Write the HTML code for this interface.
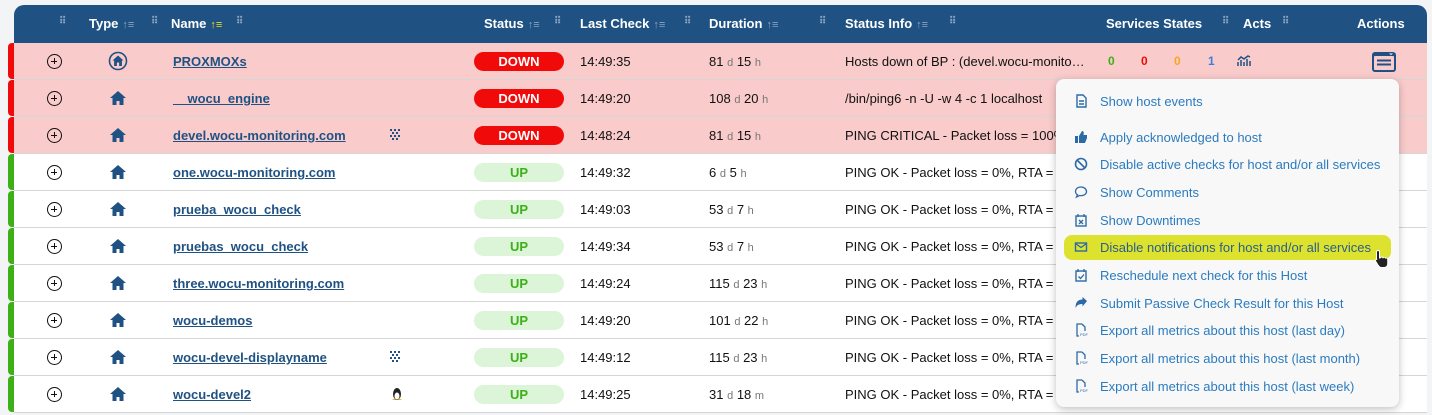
<!DOCTYPE html>
<html><head><meta charset="utf-8"><style>
*{box-sizing:border-box;margin:0;padding:0}
body{width:1432px;height:415px;overflow:hidden;background:#f3f4f6;font-family:"Liberation Sans",sans-serif;position:relative}
.hdr{position:absolute;left:14px;top:5px;width:1413px;height:38px;background:#1f5283;border-radius:10px 10px 0 0;color:#fff;font-weight:bold;font-size:13px}
.hdr>span{position:absolute;top:11px;white-space:nowrap}
.g{color:#8aa4c2;font-size:10px;letter-spacing:-1px}
.s{color:#8aa4c2;font-size:11px;font-weight:normal;margin-left:4px}
.row{position:absolute;left:14px;width:1413px;height:37px;border-bottom:1px solid #d6d6d6;font-size:13px;color:#111}
.row.d{background:#f9cbcb}.row.u{background:#fff}
.bar{position:absolute;left:8px;width:6px;height:36px;border-radius:4px 0 0 4px}
.row>*{position:absolute}
.pl{left:33px;top:11px;width:15px;height:15px;border:1.5px solid #111;border-radius:50%}
.pl:before{content:"";position:absolute;left:3px;top:5.5px;width:6px;height:1.5px;background:#111}
.pl:after{content:"";position:absolute;left:5.5px;top:3px;width:1.5px;height:6px;background:#111}
.hm{left:96px;top:11px}
.nm{left:159px;top:11px;color:#1f5283;font-weight:bold;text-decoration:underline}
.st{left:460px;top:9px;width:90px;height:19px;border-radius:10px;text-align:center;font-weight:bold;line-height:19px;font-size:13px}
.dn{background:#f10a0a;color:#fff}.up{background:#dcf5d8;color:#3cb016}
.lc{left:566px;top:11px}
.du{left:695px;top:11px}.du i{font-style:normal;color:#777;font-size:11px}
.si{left:831px;top:11px;white-space:nowrap}
.menu{position:absolute;left:1056px;top:79px;width:343px;height:328px;background:#f8f8f8;border-radius:8px;box-shadow:0 2px 8px rgba(0,0,0,.25)}
.it{position:absolute;left:44px;font-size:13px;color:#2b7bbf;white-space:nowrap}
.ic{position:absolute;left:18px;width:14px;height:14px;color:#2b6aa6}
</style></head><body>
<div class="hdr">
<span class="g" style="left:45px">⠿</span>
<span style="left:75px">Type<span class="s">↑≡</span></span><span class="g" style="left:137px">⠿</span>
<span style="left:157px">Name<span class="s" style="color:#e6e020">↑≡</span></span><span class="g" style="left:222px">⠿</span>
<span style="left:470px">Status<span class="s">↑≡</span></span><span class="g" style="left:540px">⠿</span>
<span style="left:566px">Last Check<span class="s">↑≡</span></span><span class="g" style="left:670px">⠿</span>
<span style="left:695px">Duration<span class="s">↑≡</span></span><span class="g" style="left:805px">⠿</span>
<span style="left:831px">Status Info<span class="s">↑≡</span></span><span class="g" style="left:935px">⠿</span>
<span style="left:1092px">Services States</span><span class="g" style="left:1208px">⠿</span>
<span style="left:1229px">Acts</span><span class="g" style="left:1268px">⠿</span>
<span style="left:1343px">Actions</span>
</div>

<div class="bar" style="top:43px;background:#f10a0a"></div>
<div class="row d" style="top:43px"><div class="pl"></div>
<svg class="hm" style="left:94px;top:8px" width="20" height="20" viewBox="0 0 20 20"><circle cx="10" cy="10" r="8.5" fill="none" stroke="#1f5283" stroke-width="1.6"/><path d="M10 4.5L4.5 9.5h1.6V15h2.8v-3.5h2.2V15h2.8V9.5h1.6z" fill="#1f5283"/></svg>
<span class="nm">PROXMOXs</span><span class="st dn">DOWN</span><span class="lc">14:49:35</span><span class="du">81 <i>d</i> 15 <i>h</i></span><span class="si">Hosts down of BP : (devel.wocu-monito…</span>
<span style="left:1094px;top:11px;color:#3cb016;font-weight:bold;font-size:12px">0</span>
<span style="left:1127px;top:11px;color:#f10a0a;font-weight:bold;font-size:12px">0</span>
<span style="left:1160px;top:11px;color:#f5a623;font-weight:bold;font-size:12px">0</span>
<span style="left:1194px;top:11px;color:#3a7ee0;font-weight:bold;font-size:12px">1</span>
<svg style="left:1223px;top:12px" width="14" height="12" viewBox="0 0 14 12"><path d="M1 11V7M4 11V5M7 11V7M10 11V4M13 11V6M1 5L4 2 7 4 11 1 13 2" stroke="#1f5283" stroke-width="1.5" fill="none"/></svg>
<svg style="left:1357px;top:8px" width="26" height="22" viewBox="0 0 26 22"><rect x="1" y="1" width="24" height="20" rx="3" fill="#1f5283"/><rect x="3" y="5" width="20" height="14" rx="1" fill="#f9cbcb"/><rect x="6" y="8.5" width="14" height="2" fill="#1f5283"/><rect x="6" y="12.5" width="14" height="2" fill="#1f5283"/><path d="M18 2.5h4l-2 1.5z" fill="#fff"/></svg>
</div>

<div class="bar" style="top:80px;background:#f10a0a"></div>
<div class="row d" style="top:80px"><div class="pl"></div>
<svg class="hm" width="16" height="14" viewBox="0 0 16 14"><path d="M8 0L0 7h2.5v7h4V10h3v4h4V7H16z" fill="#1f5283"/></svg>
<span class="nm">__wocu_engine</span><span class="st dn">DOWN</span><span class="lc">14:49:20</span><span class="du">108 <i>d</i> 20 <i>h</i></span><span class="si">/bin/ping6 -n -U -w 4 -c 1 localhost</span></div>

<div class="bar" style="top:117px;background:#f10a0a"></div>
<div class="row d" style="top:117px"><div class="pl"></div>
<svg class="hm" width="16" height="14" viewBox="0 0 16 14"><path d="M8 0L0 7h2.5v7h4V10h3v4h4V7H16z" fill="#1f5283"/></svg>
<span class="nm">devel.wocu-monitoring.com</span>
<svg style="left:376px;top:12px" width="11" height="11" viewBox="0 0 11 11" fill="#1f5283"><rect x="0" y="0" width="2" height="2"/><rect x="4" y="0" width="2" height="2"/><rect x="8" y="0" width="2" height="2"/><rect x="2" y="3" width="2" height="2"/><rect x="6" y="3" width="2" height="2"/><rect x="0" y="6" width="2" height="2"/><rect x="4" y="6" width="2" height="2"/><rect x="8" y="6" width="2" height="2"/><rect x="2" y="9" width="2" height="2"/><rect x="6" y="9" width="2" height="2"/></svg>
<span class="st dn">DOWN</span><span class="lc">14:48:24</span><span class="du">81 <i>d</i> 15 <i>h</i></span><span class="si">PING CRITICAL - Packet loss = 100%</span></div>

<div class="bar" style="top:154px;background:#3cb016"></div>
<div class="row u" style="top:154px"><div class="pl"></div>
<svg class="hm" width="16" height="14" viewBox="0 0 16 14"><path d="M8 0L0 7h2.5v7h4V10h3v4h4V7H16z" fill="#1f5283"/></svg>
<span class="nm">one.wocu-monitoring.com</span><span class="st up">UP</span><span class="lc">14:49:32</span><span class="du">6 <i>d</i> 5 <i>h</i></span><span class="si">PING OK - Packet loss = 0%, RTA =</span></div>

<div class="bar" style="top:191px;background:#3cb016"></div>
<div class="row u" style="top:191px"><div class="pl"></div>
<svg class="hm" width="16" height="14" viewBox="0 0 16 14"><path d="M8 0L0 7h2.5v7h4V10h3v4h4V7H16z" fill="#1f5283"/></svg>
<span class="nm">prueba_wocu_check</span><span class="st up">UP</span><span class="lc">14:49:03</span><span class="du">53 <i>d</i> 7 <i>h</i></span><span class="si">PING OK - Packet loss = 0%, RTA =</span></div>

<div class="bar" style="top:228px;background:#3cb016"></div>
<div class="row u" style="top:228px"><div class="pl"></div>
<svg class="hm" width="16" height="14" viewBox="0 0 16 14"><path d="M8 0L0 7h2.5v7h4V10h3v4h4V7H16z" fill="#1f5283"/></svg>
<span class="nm">pruebas_wocu_check</span><span class="st up">UP</span><span class="lc">14:49:34</span><span class="du">53 <i>d</i> 7 <i>h</i></span><span class="si">PING OK - Packet loss = 0%, RTA =</span></div>

<div class="bar" style="top:265px;background:#3cb016"></div>
<div class="row u" style="top:265px"><div class="pl"></div>
<svg class="hm" width="16" height="14" viewBox="0 0 16 14"><path d="M8 0L0 7h2.5v7h4V10h3v4h4V7H16z" fill="#1f5283"/></svg>
<span class="nm">three.wocu-monitoring.com</span><span class="st up">UP</span><span class="lc">14:49:24</span><span class="du">115 <i>d</i> 23 <i>h</i></span><span class="si">PING OK - Packet loss = 0%, RTA =</span></div>

<div class="bar" style="top:302px;background:#3cb016"></div>
<div class="row u" style="top:302px"><div class="pl"></div>
<svg class="hm" width="16" height="14" viewBox="0 0 16 14"><path d="M8 0L0 7h2.5v7h4V10h3v4h4V7H16z" fill="#1f5283"/></svg>
<span class="nm">wocu-demos</span><span class="st up">UP</span><span class="lc">14:49:20</span><span class="du">101 <i>d</i> 22 <i>h</i></span><span class="si">PING OK - Packet loss = 0%, RTA =</span></div>

<div class="bar" style="top:339px;background:#3cb016"></div>
<div class="row u" style="top:339px"><div class="pl"></div>
<svg class="hm" width="16" height="14" viewBox="0 0 16 14"><path d="M8 0L0 7h2.5v7h4V10h3v4h4V7H16z" fill="#1f5283"/></svg>
<span class="nm">wocu-devel-displayname</span>
<svg style="left:376px;top:12px" width="11" height="11" viewBox="0 0 11 11" fill="#1f5283"><rect x="0" y="0" width="2" height="2"/><rect x="4" y="0" width="2" height="2"/><rect x="8" y="0" width="2" height="2"/><rect x="2" y="3" width="2" height="2"/><rect x="6" y="3" width="2" height="2"/><rect x="0" y="6" width="2" height="2"/><rect x="4" y="6" width="2" height="2"/><rect x="8" y="6" width="2" height="2"/><rect x="2" y="9" width="2" height="2"/><rect x="6" y="9" width="2" height="2"/></svg>
<span class="st up">UP</span><span class="lc">14:49:12</span><span class="du">115 <i>d</i> 23 <i>h</i></span><span class="si">PING OK - Packet loss = 0%, RTA =</span></div>

<div class="bar" style="top:376px;background:#3cb016"></div>
<div class="row u" style="top:376px"><div class="pl"></div>
<svg class="hm" width="16" height="14" viewBox="0 0 16 14"><path d="M8 0L0 7h2.5v7h4V10h3v4h4V7H16z" fill="#1f5283"/></svg>
<span class="nm">wocu-devel2</span>
<svg style="left:377px;top:11px" width="12" height="14" viewBox="0 0 12 14"><ellipse cx="6" cy="7" rx="4" ry="6" fill="#222"/><ellipse cx="6" cy="9" rx="2.5" ry="3.5" fill="#fff"/><path d="M1 13l3-2 0 2zM11 13l-3-2 0 2z" fill="#f5b800"/></svg>
<span class="st up">UP</span><span class="lc">14:49:25</span><span class="du">31 <i>d</i> 18 <i>m</i></span><span class="si">PING OK - Packet loss = 0%, RTA =</span></div>

<div class="menu">
<div style="position:absolute;left:8px;top:156px;width:327px;height:25px;background:#dde22e;border-radius:8px"></div>
<svg class="ic" style="top:15px" viewBox="0 0 14 14"><path d="M3 1h6l3 3v9H3z M5 7h5M5 10h5" fill="none" stroke="#2b6aa6" stroke-width="1.4"/></svg><span class="it" style="top:15px">Show host events</span>
<svg class="ic" style="top:51px" viewBox="0 0 14 14"><path d="M1 6h3v7H1zM5 6l3-5c2 0 2 2 1.5 4H13v3l-2 5H5z" fill="#2b6aa6"/></svg><span class="it" style="top:51px">Apply acknowledged to host</span>
<svg class="ic" style="top:78px" viewBox="0 0 14 14"><circle cx="7" cy="7" r="5.5" fill="none" stroke="#2b6aa6" stroke-width="1.6"/><path d="M3 3l8 8" stroke="#2b6aa6" stroke-width="1.6"/></svg><span class="it" style="top:78px">Disable active checks for host and/or all services</span>
<svg class="ic" style="top:106px" viewBox="0 0 14 14"><path d="M7 2C3.5 2 1.5 4 1.5 6.5c0 1.5.8 2.6 2 3.3L2.5 12l3-1.5c.5.1 1 .1 1.5.1 3.5 0 5.5-2 5.5-4.1S10.5 2 7 2z" fill="none" stroke="#2b6aa6" stroke-width="1.3"/></svg><span class="it" style="top:106px">Show Comments</span>
<svg class="ic" style="top:134px" viewBox="0 0 14 14"><rect x="2" y="3" width="10" height="10" fill="none" stroke="#2b6aa6" stroke-width="1.4"/><path d="M4 1v3M10 1v3M5 7l4 4M9 7l-4 4" stroke="#2b6aa6" stroke-width="1.3"/></svg><span class="it" style="top:134px">Show Downtimes</span>
<svg class="ic" style="top:161px" viewBox="0 0 14 14"><rect x="1.5" y="3" width="11" height="8" fill="none" stroke="#2b6aa6" stroke-width="1.4"/><path d="M1.5 3.5L7 7.5l5.5-4" fill="none" stroke="#2b6aa6" stroke-width="1.3"/></svg><span class="it" style="top:161px;color:#2a5f8c">Disable notifications for host and/or all services</span>
<svg class="ic" style="top:189px" viewBox="0 0 14 14"><rect x="2" y="3" width="10" height="10" fill="none" stroke="#2b6aa6" stroke-width="1.4"/><path d="M4 1v3M10 1v3M4.5 8.5l2 2 3.5-4" fill="none" stroke="#2b6aa6" stroke-width="1.3"/></svg><span class="it" style="top:189px">Reschedule next check for this Host</span>
<svg class="ic" style="top:217px" viewBox="0 0 14 14"><path d="M13 5L8.5 1v2.5C4 3.5 1.5 6 1.5 12c1.5-3 3.5-4 7-4v2.5z" fill="#2b6aa6"/></svg><span class="it" style="top:217px">Submit Passive Check Result for this Host</span>
<svg class="ic" style="top:244px" viewBox="0 0 14 14"><path d="M8 1H3v12h2M8 1l3 3v4" fill="none" stroke="#2b6aa6" stroke-width="1.3"/><text x="6" y="13" font-size="4" fill="#2b6aa6" font-family="Liberation Sans">PDF</text></svg><span class="it" style="top:244px">Export all metrics about this host (last day)</span>
<svg class="ic" style="top:272px" viewBox="0 0 14 14"><path d="M8 1H3v12h2M8 1l3 3v4" fill="none" stroke="#2b6aa6" stroke-width="1.3"/><text x="6" y="13" font-size="4" fill="#2b6aa6" font-family="Liberation Sans">PDF</text></svg><span class="it" style="top:272px">Export all metrics about this host (last month)</span>
<svg class="ic" style="top:300px" viewBox="0 0 14 14"><path d="M8 1H3v12h2M8 1l3 3v4" fill="none" stroke="#2b6aa6" stroke-width="1.3"/><text x="6" y="13" font-size="4" fill="#2b6aa6" font-family="Liberation Sans">PDF</text></svg><span class="it" style="top:300px">Export all metrics about this host (last week)</span>
<svg style="position:absolute;left:318px;top:170px" width="16" height="20" viewBox="0 0 16 20"><path d="M4 1.5c1 0 1.5.5 1.5 1.5v6l1-.2c.5-1 2-1 2.5 0 .5-.7 2-.7 2.5.3.8-.5 2.2 0 2.2 1.2V15c0 2-1.5 3.5-3.5 3.5H7.5c-1.5 0-2.5-1-3.5-2.5L1.5 12c-.5-1 .5-2 1.5-1.3L2.5 10V3c0-1 .5-1.5 1.5-1.5z" fill="#222" stroke="#fff" stroke-width="1"/></svg>
</div>
</body></html>
